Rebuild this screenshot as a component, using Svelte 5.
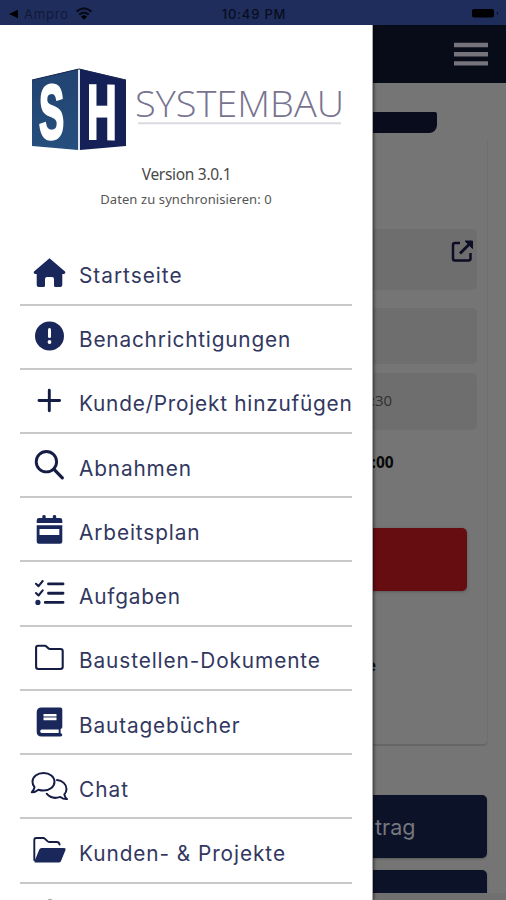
<script>
  const items = [
    { label: 'Startseite', icon: 'home', spacing: 1 },
    { label: 'Benachrichtigungen', icon: 'alert', spacing: 0.8 },
    { label: 'Kunde/Projekt hinzufügen', icon: 'plus', spacing: 0.76 },
    { label: 'Abnahmen', icon: 'search', spacing: 0.85 },
    { label: 'Arbeitsplan', icon: 'calendar', spacing: 0.88 },
    { label: 'Aufgaben', icon: 'tasks', spacing: 0.82 },
    { label: 'Baustellen-Dokumente', icon: 'folder', spacing: 0.9 },
    { label: 'Bautagebücher', icon: 'book', spacing: 0.86 },
    { label: 'Chat', icon: 'chat', spacing: 1 },
    { label: 'Kunden- & Projekte', icon: 'open', spacing: 0.93 }
  ];
</script>

<div class="screen">
  <div class="status">
    <div class="left">
      <svg width="10" height="10" viewBox="0 0 10 10"><path d="M0 5L9 .8v8.4z" /></svg>
      <span>Ampro</span>
      <svg class="wifi" width="18" height="13" viewBox="0 0 18 13">
        <path d="M1.5 4.6Q9-1.8 16.5 4.6M4.3 7.7Q9 3.6 13.7 7.7" fill="none" stroke="#070b1c" stroke-width="2.2" />
        <path d="M6 9.5Q9 7 12 9.5L9 12.7z" />
      </svg>
    </div>
    <div class="time">10:49 PM</div>
    <div class="right">
      <svg width="27" height="9" viewBox="0 0 27 9"><rect width="22" height="8.5" rx="2" fill="#000" /><path d="M25 3q2 1.2 0 2.6z" /></svg>
    </div>
  </div>

  <div class="body">
    <main>
      <header><svg width="36" height="25" viewBox="0 0 36 25"><path d="M1 3H35M1 12.2H35M1 21.4H35" stroke="#75737c" stroke-width="4.4" /></svg></header>
      <div class="tab"></div>
      <section class="card">
        <div class="field first">
          <svg width="24" height="24" viewBox="0 0 24 24" fill="none" stroke="#0d0d26" stroke-width="2.5">
            <path d="M9 4H4Q2 4 2 6V19.500Q2 21.500 4 21.500H17.500Q19.500 21.500 19.500 19.500V14" />
            <path d="M9 14.500L18.500 5" stroke-width="2.900" />
            <path d="M14 2h7.500v7.500z" fill="#0d0d26" stroke-width="1" />
          </svg>
        </div>
        <div class="field second"></div>
        <div class="field third"><span>:30</span></div>
        <div class="total">:00</div>
        <div class="red"></div>
        <div class="note">e</div>
      </section>
      <div class="action"><span>trag</span></div>
      <div class="action next"></div>
    </main>

    <nav>
      <svg class="logo" width="320" height="90" viewBox="0 0 320 90">
        <defs>
          <linearGradient id="lf" x1="0" y1="0" x2="0" y2="1"><stop offset="0" stop-color="#214371" /><stop offset="1" stop-color="#264f7d" /></linearGradient>
        </defs>
        <path d="M4 15L50 4V85L4 81z" fill="url(#lf)" />
        <path d="M52 4L98 15V81L52 85z" fill="#142056" />
        <path d="M51 4V85" stroke="#d5dbe8" stroke-width="1.300" />
        <path d="M4 15L51 4L98 15" fill="none" stroke="#16264f" stroke-width="1" />
        <g class="mark">
          <text transform="matrix(.49 -.015 0 1 11 74)">S</text>
          <text transform="matrix(.535 .01 0 1 59 73.500)">H</text>
        </g>
        <text x="107" y="51.700" font-family="'Open Sans', sans-serif" font-weight="300" font-size="36.500" fill="#77738f" textLength="209" lengthAdjust="spacingAndGlyphs">SYSTEMBAU</text>
        <path d="M110 58.300H313" stroke="#dadae1" stroke-width="2" />
      </svg>
      <div class="version">Version 3.0.1</div>
      <div class="sync">Daten zu synchronisieren: 0</div>
      <ul>
        {#each items as item}
          <li>
            <svg class="icon" width="40" height="40" viewBox="0 0 40 40">
              {#if item.icon === 'home'}
                <path d="M20.500 6.200L36 19.500Q37 21.800 34.500 22H33.300V33Q33.300 35 31.300 35H26.500Q25 35 25 33.500V27Q25 25 23 25H18Q16 25 16 27V33.500Q16 35 14.500 35H9.700Q7.700 35 7.700 33V22H6.500Q4 21.800 5 19.500z" />
              {:else if item.icon === 'alert'}
                <circle cx="20.500" cy="20" r="14.500" />
                <path d="M20.500 13.500V20.500" stroke="#fff" stroke-width="3" stroke-linecap="round" />
                <circle cx="20.500" cy="26" r="1.900" fill="#fff" />
              {:else if item.icon === 'plus'}
                <path class="line" d="M20.300 10.300V30.800M10 20.500H30.600" stroke-width="2.900" />
              {:else if item.icon === 'search'}
                <circle class="line" cx="17.400" cy="16.700" r="10.200" stroke-width="2.900" />
                <path class="line" d="M24.800 24.200L33.300 32.800" stroke-width="3.300" />
              {:else if item.icon === 'calendar'}
                <path d="M13.300 9V7.500Q13.300 6.100 15 6.100T16.700 7.500V9H23.800V7.500Q23.800 6.100 25.500 6.100T27.200 7.500V9H31Q33.300 9 33.300 11.300V14H7.700V11.300Q7.700 9 10 9z" />
                <path fill-rule="evenodd" d="M7.700 16.300H33.300V32.500Q33.300 34.800 31 34.800H10Q7.700 34.800 7.700 32.500zM10.500 20V26H30.300V20z" />
              {:else if item.icon === 'tasks'}
                <path class="line" d="M19.500 10.900H34M19.500 20.200H34M16.300 29.400H34" stroke-width="2.900" />
                <path class="line" d="M7 10.800L9.500 13.200L13.700 8M7 20.100L9.500 22.500L13.700 17.300" stroke-width="2.100" />
                <circle cx="8.900" cy="29.400" r="2.600" />
              {:else if item.icon === 'folder'}
                <path class="line" d="M9 8.700H15.800Q16.700 8.700 17.400 9.400L19.300 11.300Q20 12 21 12H31.500Q33.700 12 33.700 14.200V29.800Q33.700 32 31.500 32H9.300Q7.100 32 7.100 29.800V10.600Q7.100 8.700 9 8.700z" stroke-width="2.100" />
              {:else if item.icon === 'book'}
                <path fill-rule="evenodd" d="M12.500 5.400H31.300Q33.300 5.400 33.300 7.400V25.300Q33.300 26.300 31.600 27V31.200Q33.400 31.500 33.300 33Q33.200 34.400 31.600 34.400H12.500Q7.700 34.400 7.700 29.700V10.200Q7.700 5.400 12.500 5.400zM14.500 12V14.200H27.500V12zM14.500 16V18.200H27.500V16zM12.700 27.400Q11.200 27.600 11.200 29.200T12.700 31H29.700V27.400z" />
                <path d="M14.500 14.200H27.500V16H14.500z" fill="#929bb0" />
              {:else if item.icon === 'chat'}
                <path class="line" d="M14.500 6.900C8.200 6.900 3.500 10.800 3.500 15.700Q3.500 18.700 5.500 21.200Q5 24 2.800 26.200Q6.500 26.200 9.500 23.700Q12 24.500 14.500 24.500C20.800 24.500 25.500 20.600 25.500 15.700S20.800 6.900 14.500 6.900z" stroke-width="2" />
                <path class="line" d="M28 14C33.300 14.500 37.500 18.200 37.500 22.900Q37.500 26 35.300 28.400Q35.800 31.300 38 33.100Q34.200 33.300 31.300 30.900C26 32.800 20.800 31.400 17.700 27.700" stroke-width="2" />
              {:else}
                <path class="line" d="M5.300 30V10Q5.300 8 7.300 8H14.200Q15.200 8 16 8.800L18.400 11.200Q19.200 12 20.200 12H28Q30 12 30.600 14.500" stroke-width="1.900" />
                <path d="M12.500 18H35.200Q37.200 18 36.500 20L32 30.900Q31.400 32.400 29.800 32.400H6Q5 32.200 5.600 30.900L10.300 19.500Q11 18 12.500 18z" />
              {/if}
            </svg>
            <span style:letter-spacing="{item.spacing}px">{item.label}</span>
          </li>
        {/each}
        <li class="last">
          <svg class="icon" width="40" height="40" viewBox="0 0 40 40"><path d="M18 6.500Q21 3 24 6.500z" fill="#a8adbd" /></svg>
        </li>
      </ul>
    </nav>
  </div>
</div>

<style>
  :global(body) { margin: 0; }
  * { box-sizing: border-box; }
  svg { display: block; flex: none; }
  .screen { width: 506px; height: 900px; overflow: hidden; display: flex; flex-direction: column; background: #757575; font-family: Inter, sans-serif; }
  .status { height: 25px; flex: none; display: grid; grid-template-columns: 1fr auto 1fr; align-items: center; background: #1f2d5c; color: #080d20; font-size: 13px; letter-spacing: .8px; padding: 2px 7px 0 9px; }
  .left { display: flex; align-items: center; gap: 5px; color: #101938; }
  .wifi { margin-left: 1px; }
  .time { font-weight: 500; }
  .right { display: flex; justify-content: flex-end; }
  .body { flex: 1; min-height: 0; position: relative; overflow: hidden; }
  main { height: 875px; display: flex; flex-direction: column; border-bottom: 7px solid #707070; overflow: hidden; }
  header { height: 58px; flex: none; background: #080c18; display: flex; justify-content: flex-end; padding: 17px 17px 0 0; }
  .tab { width: 437px; height: 21px; flex: none; margin-top: 29px; background: #080c1c; border-radius: 0 2px 8px 0; }
  .card { width: 488px; height: 606px; flex: none; margin-top: 7px; padding: 89px 10px 0 0; border-right: 1px solid #6f6f6f; border-bottom: 2px solid #666; border-radius: 0 0 5px 0; display: flex; flex-direction: column; }
  .field { background: #6e6e6e; border-radius: 5px; flex: none; display: flex; }
  .first { height: 61px; justify-content: flex-end; padding: 10px 2px 0 0; }
  .second { height: 56px; margin-top: 18px; }
  .third { height: 57px; margin-top: 9px; padding: 0 0 3px 371px; align-items: center; color: #303030; font: 15px 'Open Sans', sans-serif; }
  .total { margin-top: 21px; height: 22px; padding-left: 371.500px; font: 700 15.500px/22px 'Open Sans', sans-serif; color: #080808; }
  .red { margin-top: 55px; width: 467px; height: 63px; flex: none; border-radius: 5px; background: #660d11; box-shadow: 0 1px 3px #4448; }
  .note { margin-top: 62px; padding-left: 366.500px; font: 700 16px/24px 'Open Sans', sans-serif; color: #0c0c0c; }
  .action { width: 487px; height: 63px; flex: none; margin-top: 49px; background: #0c1228; border-radius: 5px; color: #77787f; display: flex; align-items: center; padding-left: 375px; font-size: 21.500px; box-shadow: 0 1px 2px #4448; }
  .next { height: 30px; margin-top: 12px; border-radius: 5px 5px 0 0; }
  nav { position: absolute; left: 0; top: 0; width: 373px; height: 875px; background: #fff; border-right: 1px solid #aaa; box-shadow: 1px 0 3px #0008; overflow: hidden; display: flex; flex-direction: column; }
  .logo { margin: 40px 0 0 28px; }
  .mark { fill: #fff; font: 700 77px 'Liberation Sans', sans-serif; }
  .mark text { stroke: #fff; stroke-width: 2.200px; vector-effect: non-scaling-stroke; }
  .version { margin-top: 8.500px; font: 15.500px/20px 'Noto Sans', sans-serif; letter-spacing: -.3px; color: #484848; text-align: center; padding-left: 1px; }
  .sync { margin-top: 6.500px; font: 13px/18px 'Noto Sans', sans-serif; color: #555; text-align: center; letter-spacing: .1px; }
  ul { list-style: none; margin: 33.400px 0 0; padding: 0 20px; }
  li { height: 64.220px; border-bottom: 2px solid #c9c9cc; display: flex; align-items: center; padding: 0 0 0 9px; }
  li .icon { fill: #19275a; margin-top: -1px; }
  .icon .line { fill: none; stroke: #151d45; stroke-linecap: round; stroke-linejoin: round; }
  li span { margin: 6px 0 0 10px; white-space: nowrap; font-size: 20.800px; font-weight: 400; color: #32375f; }
</style>
